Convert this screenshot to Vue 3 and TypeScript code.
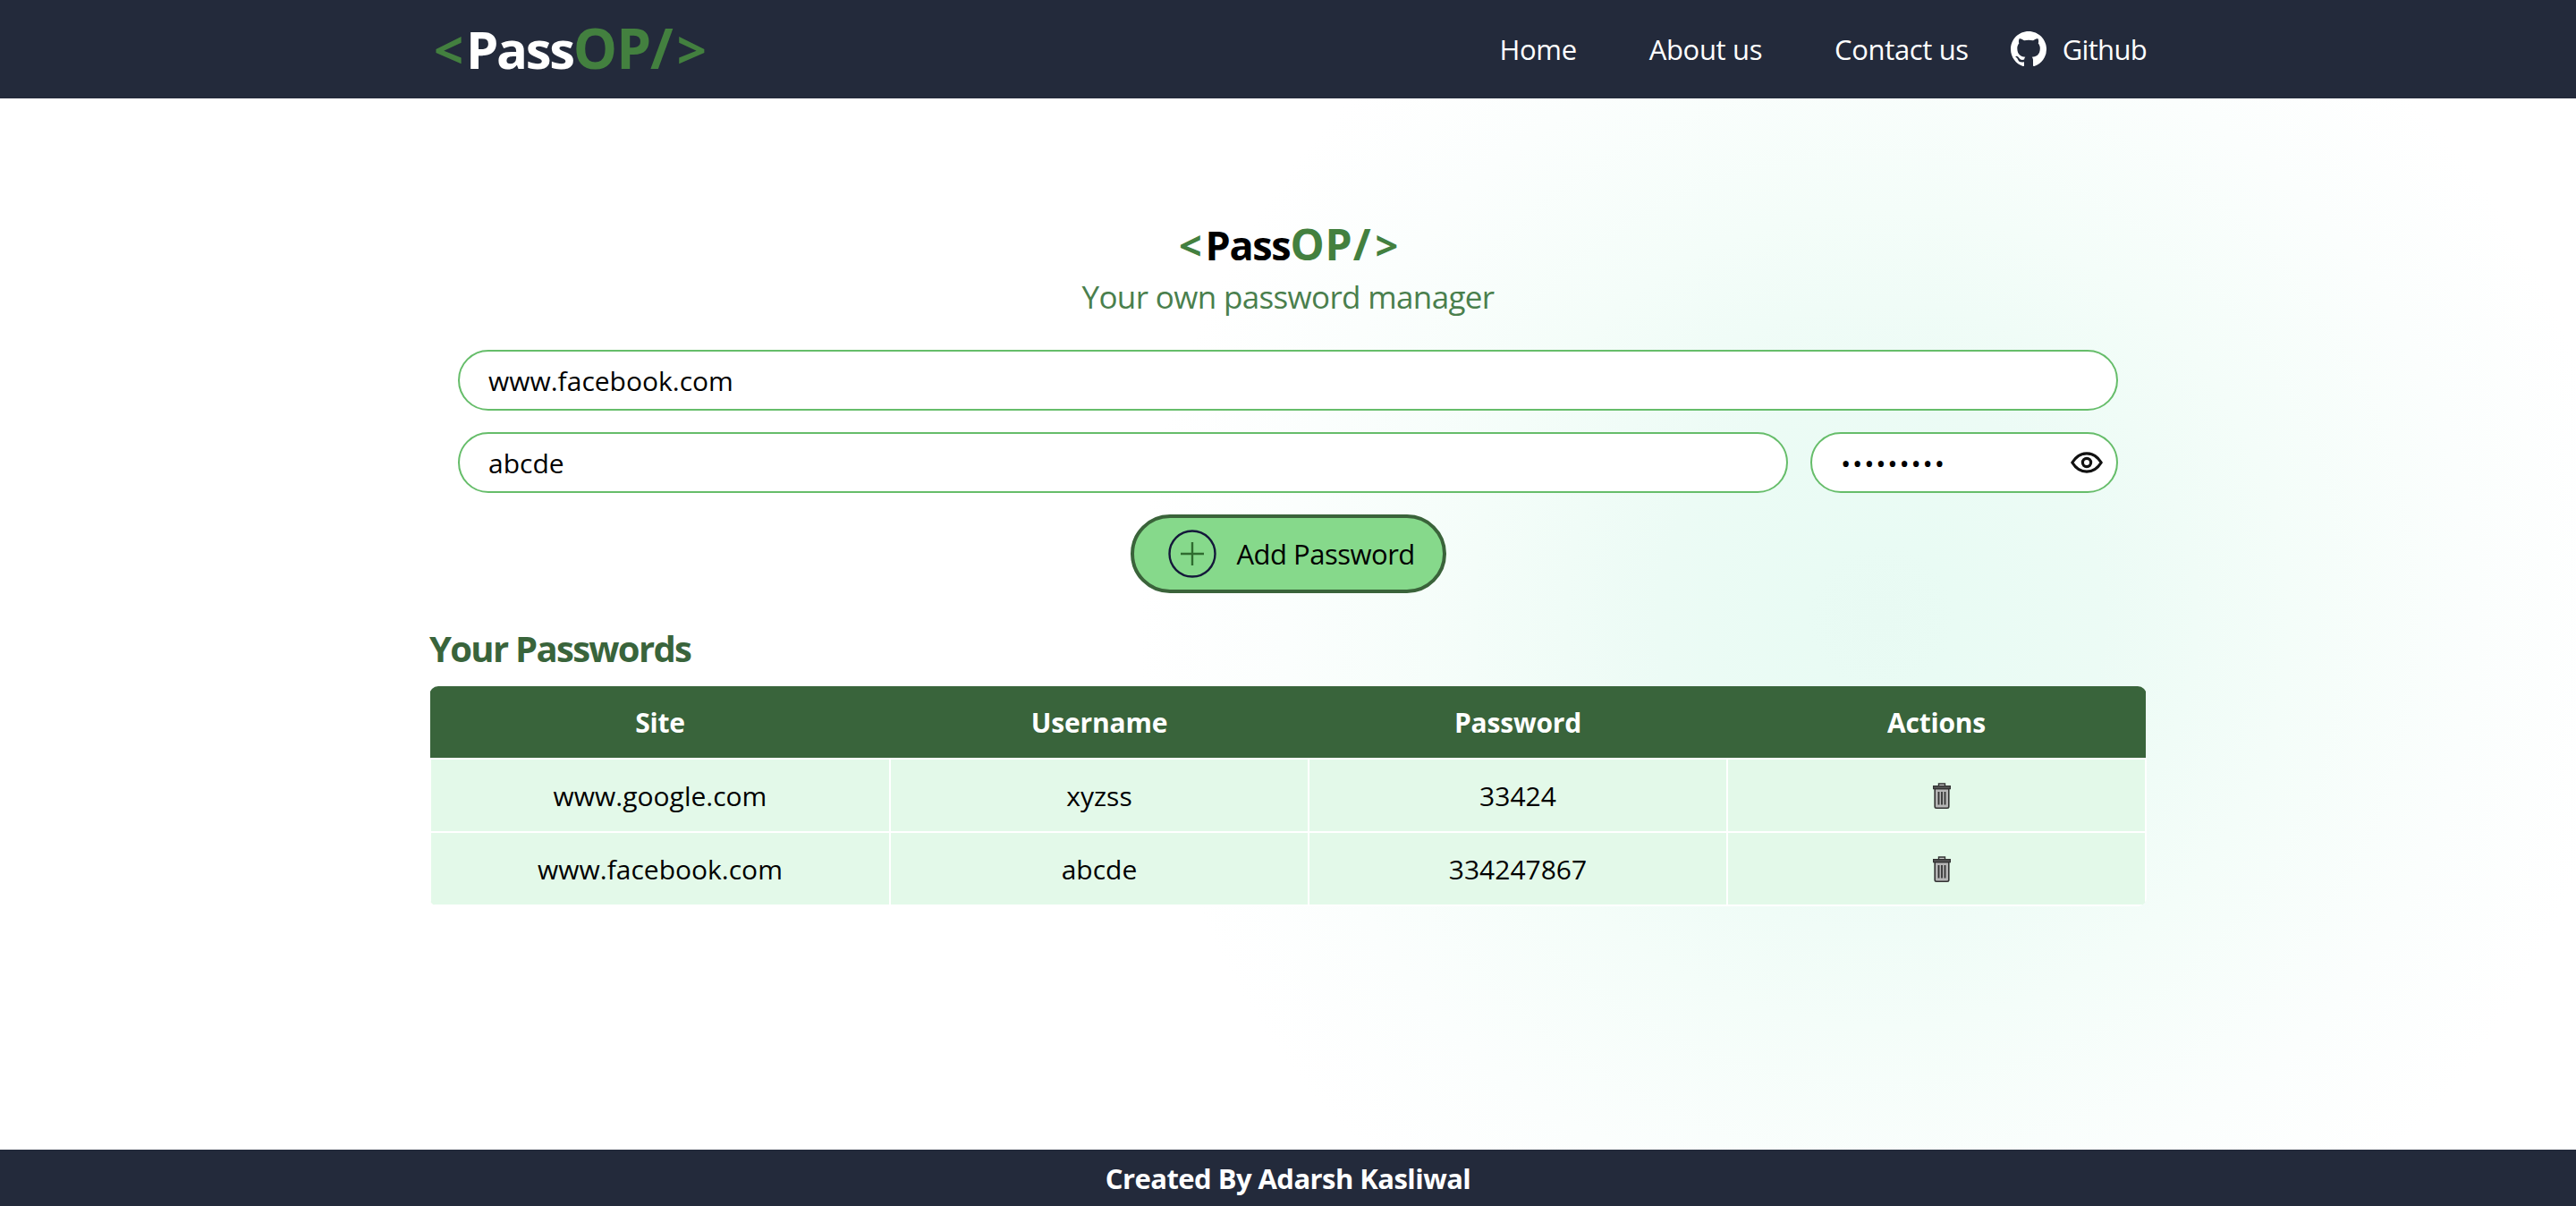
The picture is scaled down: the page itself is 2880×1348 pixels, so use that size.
<script setup lang="ts">
import { ref } from 'vue'

interface Entry {
	site: string
	username: string
	password: string
}

const site = ref('www.facebook.com')
const username = ref('abcde')
const password = ref('334247867')

const entries = ref<Entry[]>([
	{ site: 'www.google.com', username: 'xyzss', password: '33424' },
	{ site: 'www.facebook.com', username: 'abcde', password: '334247867' },
])
</script>

<template>
	<div class="page">
		<header class="topbar">
			<div class="topbar-inner">
				<div class="logo">
					<span class="green open">&lt;</span>Pass<span class="green mid">OP/</span><span class="green close">&gt;</span>
				</div>
				<nav class="nav">
					<a class="nav-link">Home</a>
					<a class="nav-link">About us</a>
					<a class="nav-link contact">Contact us</a>
					<a class="github">
						<svg class="github-icon" viewBox="0 0 16 16" aria-hidden="true">
							<path
								fill="#fff"
								d="M8 0C3.58 0 0 3.58 0 8c0 3.54 2.29 6.53 5.47 7.59.4.07.55-.17.55-.38 0-.19-.01-.82-.01-1.49-2.01.37-2.53-.49-2.69-.94-.09-.23-.48-.94-.82-1.13-.28-.15-.68-.52-.01-.53.63-.01 1.08.58 1.23.82.72 1.21 1.87.87 2.33.66.07-.52.28-.87.51-1.07-1.78-.2-3.64-.89-3.64-3.95 0-.87.31-1.59.82-2.15-.08-.2-.36-1.02.08-2.12 0 0 .67-.21 2.2.82.64-.18 1.32-.27 2-.27.68 0 1.36.09 2 .27 1.53-1.04 2.2-.82 2.2-.82.44 1.1.16 1.92.08 2.12.51.56.82 1.27.82 2.15 0 3.07-1.87 3.75-3.65 3.95.29.25.54.73.54 1.48 0 1.07-.01 1.93-.01 2.2 0 .21.15.46.55.38A8.013 8.013 0 0016 8c0-4.42-3.58-8-8-8z"
							/>
						</svg>
						Github
					</a>
				</nav>
			</div>
		</header>

		<main class="main">
			<div class="container">
				<h1 class="title">
					<span class="green open">&lt;</span>Pass<span class="green mid">OP/</span><span class="green close">&gt;</span>
				</h1>
				<p class="tagline">Your own password manager</p>

				<form class="form" @submit.prevent>
					<input v-model="site" class="field" type="text" />
					<div class="field-row">
						<input v-model="username" class="field grow" type="text" />
						<div class="password-wrap">
							<input v-model="password" class="field password" type="password" />
							<svg class="eye" viewBox="0 0 36 24" aria-hidden="true">
								<path
									d="M1.8 12C6 5.2 11.6 1.8 18 1.8S30 5.2 34.2 12C30 18.8 24.4 22.2 18 22.2S6 18.8 1.8 12Z"
									fill="none"
									stroke="#111"
									stroke-width="3.2"
									stroke-linejoin="round"
								/>
								<circle cx="18" cy="12" r="4.6" fill="none" stroke="#111" stroke-width="3.2" />
							</svg>
						</div>
					</div>
					<button type="button" class="add-button">
						<svg class="plus" viewBox="0 0 54 54" aria-hidden="true">
							<circle cx="27" cy="27" r="25.5" fill="none" stroke="#14183a" stroke-width="2.4" />
							<path d="M14 27H40M27 14V40" fill="none" stroke="#2f6b2f" stroke-width="2.4" />
						</svg>
						Add Password
					</button>
				</form>

				<h2 class="section-title">Your Passwords</h2>
				<table class="table">
					<colgroup>
						<col class="col-site" />
						<col class="col-rest" />
						<col class="col-rest" />
						<col class="col-rest" />
					</colgroup>
					<thead>
						<tr>
							<th>Site</th>
							<th>Username</th>
							<th>Password</th>
							<th>Actions</th>
						</tr>
					</thead>
					<tbody>
						<tr v-for="entry in entries" :key="entry.site">
							<td>{{ entry.site }}</td>
							<td>{{ entry.username }}</td>
							<td>{{ entry.password }}</td>
							<td>
								<svg class="trash" viewBox="0 0 20 29" aria-hidden="true">
									<path d="M6.5 3.5V1h7v2.5" fill="#c9c9c9" stroke="#333" stroke-width="1.4" />
									<path d="M2.2 6.5H17.8V26.5Q17.8 28.2 16 28.2H4Q2.2 28.2 2.2 26.5Z" fill="#b5b5b5" stroke="#333" stroke-width="1.6" />
									<path d="M.6 3.6H19.4V6.6H.6Z" fill="#555" stroke="#333" stroke-width="1.2" />
									<path d="M6.5 10V24.5M10 10V24.5M13.5 10V24.5" stroke="#333" stroke-width="1.8" />
								</svg>
							</td>
						</tr>
					</tbody>
				</table>
			</div>
		</main>

		<footer class="footer">Created By Adarsh Kasliwal</footer>
	</div>
</template>

<style>
body {
	margin: 0;
	background: #fff;
}
</style>

<style scoped>
.page {
	display: flex;
	flex-direction: column;
	min-height: 100vh;
	font-family: 'Open Sans', 'Noto Sans', sans-serif;
	color: #000;
}

.green {
	color: #43803f;
}

.topbar {
	background: #232a3b;
	color: #fff;
}

.topbar-inner {
	display: flex;
	align-items: center;
	justify-content: space-between;
	box-sizing: border-box;
	width: 1920px;
	height: 110px;
	margin: 0 auto;
}

.logo {
	padding-left: 5px;
	font-size: 58px;
	font-weight: 700;
	line-height: 1;
	letter-spacing: -2.3px;
}

.logo .open {
	margin-right: 5px;
}

.logo .mid {
	font-size: 62px;
	line-height: 0;
	letter-spacing: -1px;
}

.logo .close {
	margin-left: 5px;
}

.nav {
	display: flex;
	align-items: center;
	gap: 81px;
	font-size: 31px;
	letter-spacing: -0.35px;
}

.contact {
	margin-right: -34px;
}

.github {
	display: flex;
	align-items: center;
	gap: 18px;
	letter-spacing: -0.7px;
}

.github-icon {
	width: 40px;
	height: 40px;
}

.main {
	flex: 1;
	background: radial-gradient(
		circle 830px at 73% 49.4%,
		#e8faf3 0,
		#e9fbf4 10%,
		#ecfbf5 30%,
		#f4fdf9 55%,
		#fbfefd 80%,
		#fff 100%
	);
}

.container {
	width: 1920px;
	margin: 0 auto;
	padding-top: 134px;
}

.title {
	margin: 0;
	font-size: 45px;
	font-weight: 700;
	line-height: 60px;
	letter-spacing: -1.3px;
	text-align: center;
}

.title .open {
	margin-right: 5px;
}

.title .mid {
	font-size: 48px;
	line-height: 0;
	letter-spacing: 1px;
}

.title .close {
	margin-left: 4px;
}

.tagline {
	margin: 0;
	font-size: 35px;
	line-height: 56px;
	letter-spacing: -0.65px;
	text-align: center;
	color: #4a7f4d;
}

.form {
	display: flex;
	flex-direction: column;
	align-items: center;
	gap: 24px;
	padding: 31px 32px 0;
}

.field-row {
	display: flex;
	gap: 25px;
	width: 100%;
}

.field {
	box-sizing: border-box;
	width: 100%;
	height: 68px;
	padding: 0 32px;
	border: 2px solid #66bd6a;
	border-radius: 34px;
	outline: none;
	background: #fff;
	font: 400 30px 'Open Sans', sans-serif;
	color: #000;
}

.grow {
	flex: 1;
}

.password-wrap {
	position: relative;
	width: 344px;
}

.password {
	padding-right: 70px;
	letter-spacing: 1.8px;
}

.eye {
	position: absolute;
	top: 22px;
	right: 17px;
	width: 36px;
	height: 24px;
}

.add-button {
	display: flex;
	align-items: center;
	gap: 23px;
	box-sizing: border-box;
	width: 353px;
	height: 88px;
	padding: 0 0 0 38px;
	border: 4px solid #3a633a;
	border-radius: 44px;
	background: #86d98b;
	font: 400 31px 'Open Sans', sans-serif;
	letter-spacing: -0.5px;
	color: #000;
}

.plus {
	flex: none;
	width: 54px;
	height: 54px;
}

.section-title {
	margin: 38px 0 0;
	font-size: 40px;
	font-weight: 700;
	line-height: 48px;
	letter-spacing: -1.7px;
	color: #39643b;
}

.table {
	width: 1920px;
	margin-top: 18px;
	border-collapse: collapse;
	table-layout: fixed;
	border-radius: 10px;
	overflow: hidden;
	text-align: center;
}

.col-site {
	width: 514px;
}

.table th {
	height: 80px;
	padding: 0;
	background: #39643b;
	font-size: 30px;
	font-weight: 700;
	letter-spacing: -0.2px;
	color: #fff;
}

.table td {
	height: 80px;
	padding: 0;
	border: 2px solid #fff;
	background: #e3f9e9;
	font-size: 30px;
}

.trash {
	display: block;
	width: 20px;
	height: 29px;
	margin: 0 auto;
	translate: 6px 0;
}

.footer {
	display: flex;
	align-items: center;
	justify-content: center;
	height: 63px;
	background: #232a3b;
	font-size: 31px;
	font-weight: 700;
	letter-spacing: -0.55px;
	color: #fff;
}
</style>
